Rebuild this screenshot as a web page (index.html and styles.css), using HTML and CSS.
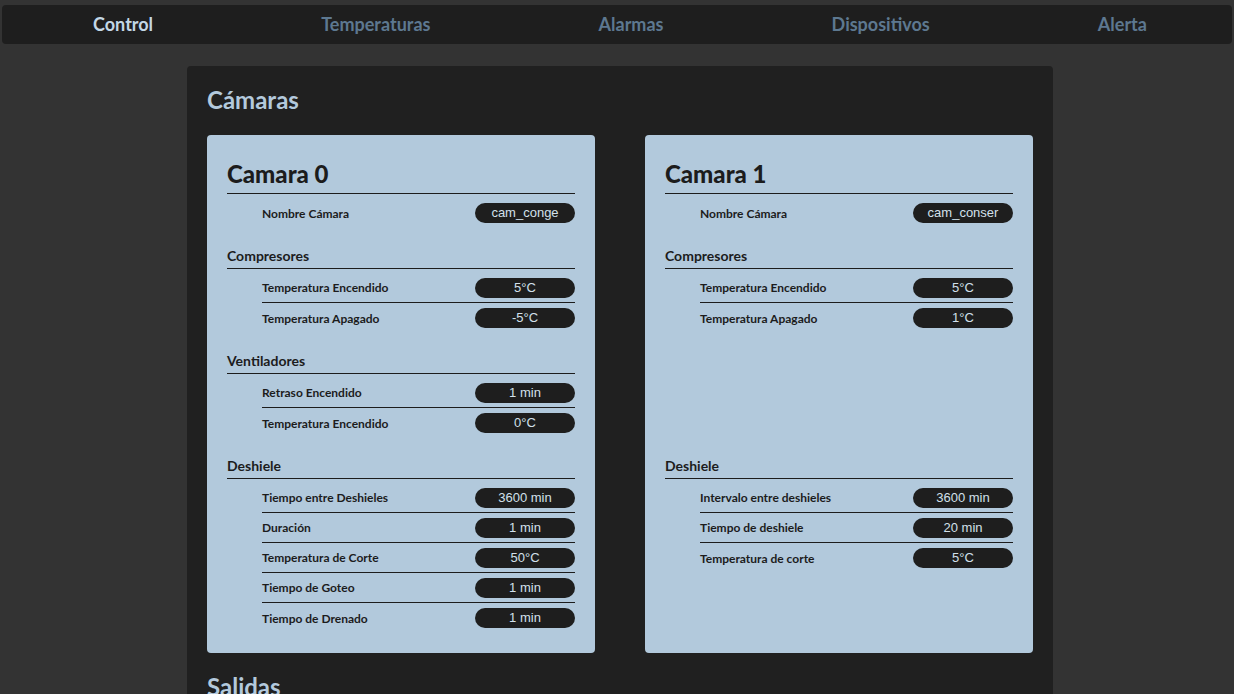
FILE: index.html
```html
<!DOCTYPE html>
<html lang="es">
<head>
<meta charset="utf-8">
<title>Control</title>
<link rel="stylesheet" href="styles.css">
</head>
<body>
<nav class="nav">
  <a class="nav-item active">Control</a>
  <a class="nav-item">Temperaturas</a>
  <a class="nav-item">Alarmas</a>
  <a class="nav-item">Dispositivos</a>
  <a class="nav-item">Alerta</a>
</nav>
<main class="panel">
  <h1 class="panel-title">Cámaras</h1>
  <div class="cards">
    <section class="card">
      <h2 class="card-title">Camara 0</h2>
      <div class="rows">
        <div class="row"><span class="label">Nombre Cámara</span><span class="pill">cam_conge</span></div>
      </div>
      <h3 class="group-title">Compresores</h3>
      <div class="rows">
        <div class="row"><span class="label">Temperatura Encendido</span><span class="pill">5°C</span></div>
        <div class="row"><span class="label">Temperatura Apagado</span><span class="pill">-5°C</span></div>
      </div>
      <h3 class="group-title">Ventiladores</h3>
      <div class="rows">
        <div class="row"><span class="label">Retraso Encendido</span><span class="pill">1 min</span></div>
        <div class="row"><span class="label">Temperatura Encendido</span><span class="pill">0°C</span></div>
      </div>
      <h3 class="group-title">Deshiele</h3>
      <div class="rows">
        <div class="row"><span class="label">Tiempo entre Deshieles</span><span class="pill">3600 min</span></div>
        <div class="row"><span class="label">Duración</span><span class="pill">1 min</span></div>
        <div class="row"><span class="label">Temperatura de Corte</span><span class="pill">50°C</span></div>
        <div class="row"><span class="label">Tiempo de Goteo</span><span class="pill">1 min</span></div>
        <div class="row"><span class="label">Tiempo de Drenado</span><span class="pill">1 min</span></div>
      </div>
    </section>
    <section class="card">
      <h2 class="card-title">Camara 1</h2>
      <div class="rows">
        <div class="row"><span class="label">Nombre Cámara</span><span class="pill">cam_conser</span></div>
      </div>
      <h3 class="group-title">Compresores</h3>
      <div class="rows">
        <div class="row"><span class="label">Temperatura Encendido</span><span class="pill">5°C</span></div>
        <div class="row"><span class="label">Temperatura Apagado</span><span class="pill">1°C</span></div>
      </div>
      <div class="group-spacer"></div>
      <h3 class="group-title">Deshiele</h3>
      <div class="rows">
        <div class="row"><span class="label">Intervalo entre deshieles</span><span class="pill">3600 min</span></div>
        <div class="row"><span class="label">Tiempo de deshiele</span><span class="pill">20 min</span></div>
        <div class="row"><span class="label">Temperatura de corte</span><span class="pill">5°C</span></div>
      </div>
    </section>
  </div>
  <h1 class="panel-title next">Salidas</h1>
</main>
</body>
</html>
```

FILE: styles.css
```css
* { box-sizing: border-box; }

html, body {
  margin: 0;
  background: #333333;
  font-family: Lato, "Noto Sans", sans-serif;
  height: 694px;
  overflow: hidden;
}

body {
  padding: 5px 2px 0;
}

.nav {
  display: flex;
  justify-content: space-around;
  align-items: center;
  height: 39px;
  padding: 0 1px 2px 7px;
  background: #1e1e1e;
  border-radius: 4px;
}

.nav-item {
  font-size: 18px;
  font-weight: 700;
  color: #5d7890;
  text-decoration: none;
}

.nav-item.active {
  color: #c3d7e6;
}

.panel {
  width: 866px;
  margin: 22px 0 0 185px;
  padding: 19px 20px 0;
  background: #202020;
  border-radius: 4px 4px 0 0;
  min-height: 640px;
}

.panel-title {
  margin: 0 0 20px;
  font-size: 24px;
  line-height: 30px;
  font-weight: 700;
  color: #b3c9dc;
}

.panel-title.next {
  margin-top: 19px;
}

.cards {
  display: grid;
  grid-template-columns: 388px 388px;
  column-gap: 50px;
}

.card {
  background: #b2c9dc;
  border-radius: 4px;
  padding: 20px;
  color: #1c1c1c;
}

.card-title {
  margin: 0;
  font-size: 24px;
  line-height: 38px;
  font-weight: 900;
  border-bottom: 1px solid #1c1c1c;
}

.group-title {
  margin: 17px 0 0;
  padding-bottom: 1px;
  font-size: 14px;
  line-height: 22px;
  font-weight: 700;
  border-bottom: 1px solid #1c1c1c;
}

.group-spacer {
  height: 105px;
}

.rows {
  margin: 4px 0 0 35px;
}

.row {
  display: flex;
  justify-content: space-between;
  align-items: center;
  height: 30px;
  border-bottom: 1px solid #1c1c1c;
}

.row:last-child {
  border-bottom: none;
}

.label {
  font-size: 12px;
  font-weight: 700;
}

.pill {
  width: 100px;
  height: 20px;
  line-height: 20px;
  border-radius: 10px;
  background: #1e1e1e;
  color: #d3e0eb;
  text-align: center;
  font-family: "Liberation Sans", Arial, sans-serif;
  font-size: 13px;
}
```
